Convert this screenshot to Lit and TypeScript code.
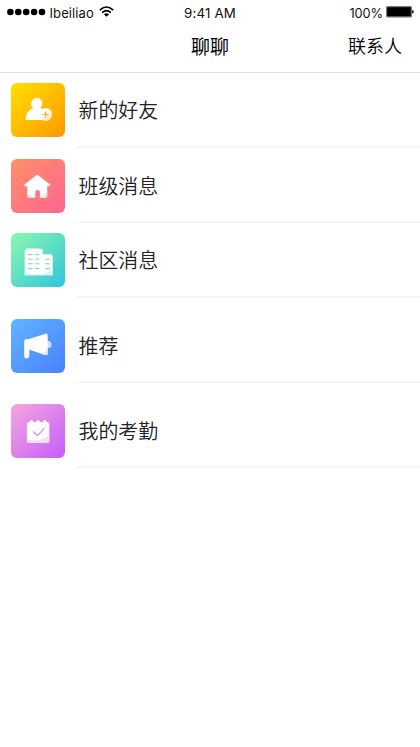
import { LitElement, html, svg, css } from "lit";
import { customElement, property } from "lit/decorators.js";

const friend = svg`
  <defs><linearGradient id="badge" x1="0" y1="0" x2="1" y2="1"><stop offset="0.3" stop-color="#fff"/><stop offset="1" stop-color="#ffe3b0"/></linearGradient></defs>
  <path fill="#fff" d="M14.7 36.9C14.7 31 17.2 26.7 22.1 25.1A5.8 5.8 0 1 1 29.5 25.1C32 26 36 30 36 36.9Z"/>
  <circle cx="34.6" cy="31.4" r="6.5" fill="url(#badge)"/>
  <path d="M31.5 31.5h6M34.5 28.5v6" stroke="#ffae16" stroke-width="1.1"/>`;

const home = svg`
  <path fill="#fff" d="M25.2 16.2Q26.2 15.4 27.2 16.2L39.1 25.4Q40 27 38.4 27.3H36.2V36.2Q36.2 38.8 33.6 38.8H28.9V33.2Q28.9 31.1 26.6 31.1T24.3 33.2V38.8H18.7Q16.2 38.8 16.2 36.2V27.3H14Q12.5 26.8 13.6 25.4Z"/>
  <path fill="#ffe3e7" d="M36.2 31.8V36.2Q36.2 38.8 33.6 38.8H28.9V37.3Q33.8 36.3 36.2 31.8ZM16.2 34.5Q19 37 24.3 37.5V38.8H18.7Q16.2 38.8 16.2 36.2Z"/>`;

const building = svg`
  <path fill="#fff" d="M13.7 42.3V18.2Q13.7 15.5 16.4 15.5H29Q31.7 15.5 31.7 18.2V21.3H39Q41.7 21.3 41.7 24V42.3Z"/>
  <path fill="#d3f6f0" d="M41.7 34.5V42.3H13.7V37.8Q17 41.3 25 41.7Q37 41.7 41.7 34.5Z"/>
  <path stroke="#6fdfc9" stroke-width="1.1" d="M17 21.5h4.7M24 21.5h4.5M17 26.2h4.7M24 26.2h4.5M17 30.8h4.7M24 30.8h4.5M17 35.5h4.7M24 35.5h4.5M34 26.2h4.5M34 30.8h4.5M34 35.5h4.5"/>`;

const horn = svg`
  <circle cx="37" cy="25.6" r="3.5" fill="#c9e0ff"/>
  <path fill="#fff" d="M13.2 22.3Q13.2 20.5 15 20.3L18.2 20.1L34.6 14.7Q36.7 14.2 36.7 16.3V34Q36.7 36.8 34.2 36.1L18.3 30.8V36.7Q18.2 39.4 15.4 39.4Q13.2 39.4 13.2 37.2Z"/>
  <path fill="#d8e8ff" d="M36.7 29.8V34Q36.7 36.8 34.2 36.1L30.8 35Q35 33.5 36.7 29.8Z"/>`;

const calendar = svg`
  <path fill="#fff" d="M15.9 20.1Q15.9 17.9 18 17.9H18.8Q18.8 15.9 20.6 15.9T22.4 17.9H25.2Q25.2 15.9 27 15.9T28.8 17.9H31.8Q31.8 15.9 33.6 15.9T35.4 17.9H36.2Q38.3 17.9 38.3 20.1V36.8Q38.3 39 36.1 39H18.1Q15.9 39 15.9 36.8Z"/>
  <path fill="#f3dffc" d="M15.9 35.5Q31.5 38.5 38.3 30.4V36.8Q38.3 39 36.1 39H18.1Q15.9 39 15.9 36.8Z"/>
  <path fill="none" stroke="#d584ed" stroke-width="1.1" d="M22.2 27.3L26.4 31.6L33.1 24.6"/>`;

const entries = [
  { tone: "yellow", label: "新的好友", glyph: friend },
  { tone: "coral", label: "班级消息", glyph: home },
  { tone: "green", label: "社区消息", glyph: building },
  { tone: "blue", label: "推荐", glyph: horn },
  { tone: "purple", label: "我的考勤", glyph: calendar },
];

@customElement("chat-entry")
class ChatEntry extends LitElement {
  @property() label = "";
  @property() tone = "";
  @property({ attribute: false }) glyph: unknown;

  static styles = css`
    :host { display: flex; box-sizing: border-box; padding-left: 11px; }
    .tile { flex: none; width: 54px; height: 54px; border-radius: 6px; }
    .tile svg { display: block; }
    .yellow { background: linear-gradient(135deg, #ffe000, #ff9800); }
    .coral { background: linear-gradient(135deg, #ff9068, #ff6590); }
    .green { background: linear-gradient(135deg, #8cf8ae, #2fc5dc); }
    .blue { background: linear-gradient(135deg, #60b5ff, #4a80ff); }
    .purple { background: linear-gradient(135deg, #f4a7dc, #c45dfc); }
    .label { height: 54px; line-height: 54px; margin-left: 13.5px; font-size: 19.9px; font-weight: 350; color: #222; }
  `;

  render() {
    return html`
      <div class="tile ${this.tone}"><svg width="54" height="54" viewBox="0 0 54 54">${this.glyph}</svg></div>
      <span class="label">${this.label}</span>`;
  }
}

@customElement("app-root")
class AppRoot extends LitElement {
  static styles = css`
    :host { display: block; min-height: 747px; background: #fff; color: #000; font-family: "Noto Sans CJK SC", sans-serif; }
    .status { display: grid; grid-template-columns: 1fr auto 1fr; align-items: center; height: 26px; padding: 0 6px 0 7px; font: 13px/26px Inter, sans-serif; color: #111; }
    .carrier, .power { display: flex; align-items: center; height: 26px; }
    .carrier { letter-spacing: 0.1px; }
    .clock { font-size: 13.3px; letter-spacing: 0.15px; margin-right: 1px; }
    .power { justify-content: flex-end; font-size: 12.8px; line-height: 27px; letter-spacing: -0.1px; }
    .dots { margin: -3px 3.5px 0 0; }
    .wifi { margin: -4px 0 0 5px; }
    .battery { margin: -3px 0 0 3px; }
    .nav { display: grid; grid-template-columns: 1fr auto 1fr; box-sizing: border-box; height: 47px; border-bottom: 1px solid #dfdfdf; line-height: 40px; }
    .title { grid-column: 2; font-size: 19px; font-weight: 400; }
    .action { justify-self: end; padding-right: 18px; font-size: 18px; line-height: 38px; font-weight: 350; }
    .list { display: grid; grid-template-rows: 75px 75px 75px 85px 85px; }
    .row { position: relative; padding-top: 10px; }
    .row:nth-child(2) { padding-top: 11px; }
    .row:nth-child(n + 4) { padding-top: 21px; }
    .row::after { content: ""; position: absolute; left: 77px; right: 0; bottom: 0; height: 2px; background: #f4f4f4; }
  `;

  render() {
    return html`
      <header>
        <div class="status">
          <div class="carrier">
            <svg class="dots" width="39" height="8" fill="#000">${[3.4, 11.3, 19.2, 27.1, 35].map((x) => svg`<circle cx=${x} cy="4" r="3.3"/>`)}</svg>
            <span>Ibeiliao</span>
            <svg class="wifi" width="15" height="11" viewBox="0 0 15 11" fill="none" stroke="#000" stroke-width="1.6"><path d="M.8 4.1Q7.5-2.1 14.2 4.1M3.2 6.7Q7.5 2.7 11.8 6.7"/><path fill="#000" stroke="none" d="M4.9 8.3Q7.5 6.2 10.1 8.3L7.5 10.8Z"/></svg>
          </div>
          <span class="clock">9:41 AM</span>
          <div class="power">
            <span>100%</span>
            <svg class="battery" width="28" height="12"><rect x=".6" y=".6" width="24.8" height="10.3" rx="1" fill="#000" stroke="#777" stroke-width="1.2"/><path d="M26 4Q28 4 28 5.8T26 7.6Z" fill="#333"/></svg>
          </div>
        </div>
        <nav class="nav"><span class="title">聊聊</span><span class="action">联系人</span></nav>
      </header>
      <main class="list">
        ${entries.map((e) => html`<chat-entry class="row" .label=${e.label} .tone=${e.tone} .glyph=${e.glyph}></chat-entry>`)}
      </main>`;
  }
}
